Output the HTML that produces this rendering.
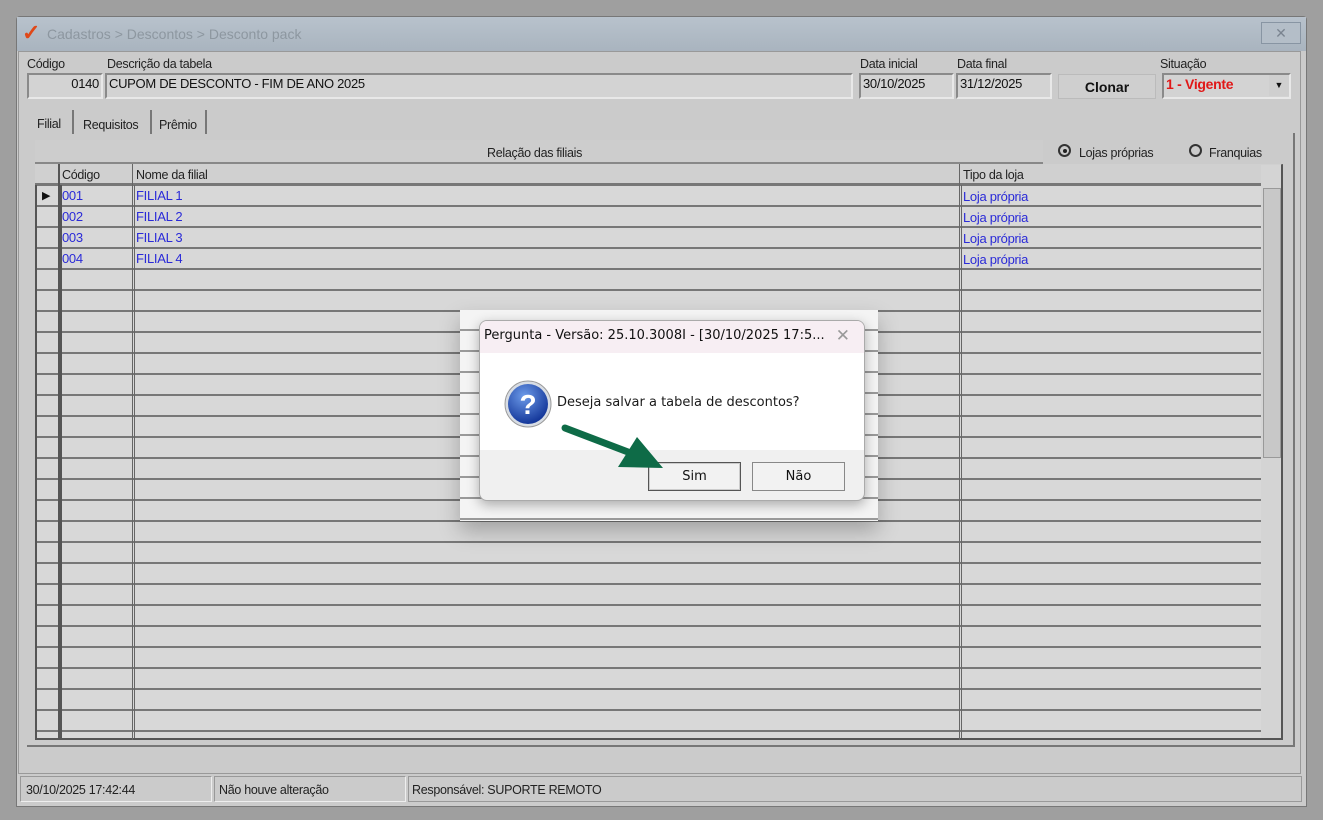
<!DOCTYPE html>
<html><head><meta charset="utf-8"><style>
*{margin:0;padding:0;box-sizing:border-box}
body{width:1323px;height:820px;background:#9f9f9f;position:relative;overflow:hidden;font-family:"Liberation Sans",Arial,sans-serif;font-size:12px;color:#111}
.a{position:absolute}
.win{left:16px;top:16px;width:1291px;height:791px;background:#cbcbcb;border:1px solid #777;border-radius:4px 4px 0 0}
.title{left:17px;top:17px;width:1289px;height:34px;background:linear-gradient(#b8c2cc,#a9b4bf);}
.lbl{font-size:12.5px;color:#222;letter-spacing:-0.3px}
.inp{background:#d3d3d3;border:2px solid #8a8a8a;border-right-color:#e8e8e8;border-bottom-color:#e8e8e8;font-size:13px;padding:1px 2px;letter-spacing:-0.3px}
.grid{left:35px;top:164px;width:1248px;height:576px;border:2px solid #555;border-top:1px solid #888;
background:
linear-gradient(90deg,transparent 23px,#555 23px,#555 25px,transparent 25px,transparent 97px,#666 97px,#666 98px,transparent 98px,transparent 924px,#666 924px,#666 925px,transparent 925px),
repeating-linear-gradient(180deg,transparent 0,transparent 19px,#777 19px,#777 21px);
background-color:#d8d8d8;background-position:0 0,0 0}
.blue{color:#2a2ad8;font-size:13px;letter-spacing:-0.3px}
</style></head><body>
<div class="a win"></div>
<div class="a title"></div>
<div class="a" style="left:22px;top:22px;font-size:22px;color:#e04818;font-weight:bold;line-height:22px">✓</div>
<div class="a" style="left:47px;top:26px;font-size:14px;color:#8d97a0">Cadastros &gt; Descontos &gt; Desconto pack</div>
<div class="a" style="left:1261px;top:22px;width:40px;height:22px;border:1px solid #8895a3;background:#b4bec8;color:#7a8490;text-align:center;font-size:14px;line-height:20px">✕</div>
<div class="a" style="left:18px;top:51px;width:1283px;height:723px;background:#cbcbcb;border:1px solid #999"></div>

<div class="a lbl" style="left:27px;top:57px">Código</div>
<div class="a lbl" style="left:107px;top:57px">Descrição da tabela</div>
<div class="a lbl" style="left:860px;top:57px">Data inicial</div>
<div class="a lbl" style="left:957px;top:57px">Data final</div>
<div class="a lbl" style="left:1160px;top:57px">Situação</div>
<div class="a inp" style="left:27px;top:73px;width:76px;height:26px;text-align:right">0140</div>
<div class="a inp" style="left:105px;top:73px;width:748px;height:26px">CUPOM DE DESCONTO - FIM DE ANO 2025</div>
<div class="a inp" style="left:859px;top:73px;width:95px;height:26px">30/10/2025</div>
<div class="a inp" style="left:956px;top:73px;width:96px;height:26px">31/12/2025</div>
<div class="a" style="left:1058px;top:74px;width:98px;height:25px;background:#cfcfcf;border:1px solid #bbb;font-weight:bold;text-align:center;line-height:24px;font-size:14px">Clonar</div>
<div class="a inp" style="left:1162px;top:73px;width:129px;height:26px;color:#e01818;font-weight:bold;font-size:14px">1 - Vigente</div>
<div class="a" style="left:1269px;top:75px;width:20px;height:21px;background:#cfcfcf;font-size:9px;text-align:center;line-height:21px">▼</div>

<div class="a lbl" style="left:37px;top:117px">Filial</div>
<div class="a" style="left:72px;top:110px;width:2px;height:24px;background:#777"></div>
<div class="a lbl" style="left:83px;top:118px">Requisitos</div>
<div class="a" style="left:150px;top:110px;width:2px;height:24px;background:#777"></div>
<div class="a lbl" style="left:159px;top:118px">Prêmio</div>
<div class="a" style="left:205px;top:110px;width:2px;height:24px;background:#777"></div>
<div class="a" style="left:27px;top:133px;width:1268px;height:614px;border-right:2px solid #777;border-bottom:2px solid #777"></div>

<div class="a" style="left:35px;top:140px;width:1008px;height:24px;background:#cdcdcd;border-bottom:2px solid #888"></div>
<div class="a lbl" style="left:487px;top:146px">Relação das filiais</div>
<div class="a" style="left:1058px;top:144px;width:13px;height:13px;border:2px solid #333;border-radius:50%"><div style="position:absolute;left:2.5px;top:2.5px;width:4px;height:4px;background:#222;border-radius:50%"></div></div>
<div class="a lbl" style="left:1079px;top:146px">Lojas próprias</div>
<div class="a" style="left:1189px;top:144px;width:13px;height:13px;border:2px solid #333;border-radius:50%"></div>
<div class="a lbl" style="left:1209px;top:146px">Franquias</div>

<div class="a grid"></div>
<div class="a" style="left:35px;top:164px;width:1246px;height:21px;background:#d0d0d0;border-bottom:2px solid #777"></div>
<div class="a" style="left:58px;top:164px;width:2px;height:576px;background:#555"></div>
<div class="a" style="left:132px;top:164px;width:1px;height:576px;background:#666"></div>
<div class="a" style="left:959px;top:164px;width:1px;height:576px;background:#666"></div>
<div class="a" style="left:1261px;top:165px;width:20px;height:573px;background:#d4d4d4"></div>
<div class="a" style="left:1263px;top:188px;width:18px;height:270px;background:#c8c8c8;border:1px solid #999"></div>
<div class="a lbl" style="left:62px;top:168px">Código</div>
<div class="a lbl" style="left:136px;top:168px">Nome da filial</div>
<div class="a lbl" style="left:963px;top:168px">Tipo da loja</div>
<div class="a" style="left:42px;top:189px;font-size:11px">▶</div>
<div class="a blue" style="left:62px;top:188px">001</div><div class="a blue" style="left:136px;top:188px">FILIAL 1</div><div class="a blue" style="left:963px;top:189px">Loja própria</div>
<div class="a blue" style="left:62px;top:209px">002</div><div class="a blue" style="left:136px;top:209px">FILIAL 2</div><div class="a blue" style="left:963px;top:210px">Loja própria</div>
<div class="a blue" style="left:62px;top:230px">003</div><div class="a blue" style="left:136px;top:230px">FILIAL 3</div><div class="a blue" style="left:963px;top:231px">Loja própria</div>
<div class="a blue" style="left:62px;top:251px">004</div><div class="a blue" style="left:136px;top:251px">FILIAL 4</div><div class="a blue" style="left:963px;top:252px">Loja própria</div>

<div class="a" style="left:20px;top:776px;width:192px;height:26px;border:1px solid #999;border-right-color:#eee;border-bottom-color:#eee"></div>
<div class="a" style="left:214px;top:776px;width:192px;height:26px;border:1px solid #999;border-right-color:#eee;border-bottom-color:#eee"></div>
<div class="a" style="left:408px;top:776px;width:894px;height:26px;border:1px solid #999"></div>
<div class="a lbl" style="left:26px;top:783px">30/10/2025 17:42:44</div>
<div class="a lbl" style="left:219px;top:783px">Não houve alteração</div>
<div class="a lbl" style="left:412px;top:783px">Responsável: SUPORTE REMOTO</div>

<!-- bright area behind dialog -->
<div class="a" style="left:460px;top:310px;width:418px;height:211px;background:repeating-linear-gradient(180deg,#f4f4f4 0,#f4f4f4 19px,#999 19px,#999 21px);box-shadow:0 10px 20px rgba(0,0,0,.25)"></div>
<div class="a" style="left:479px;top:320px;width:386px;height:181px;background:#f0f0f0;border:1px solid #aaa;border-radius:8px;overflow:hidden;box-shadow:0 4px 12px rgba(0,0,0,.3)">
  <div style="height:32px;background:#f7eef3;font-family:'DejaVu Sans',sans-serif;font-size:13px;padding:7px 0 0 4px;color:#111">Pergunta - Versão: 25.10.3008I - [30/10/2025 17:5...</div>
  <div class="a" style="right:14px;top:5px;color:#999;font-size:17px">✕</div>
  <div style="height:97px;background:#fff"></div>
</div>
<svg class="a" style="left:503px;top:379px" width="52" height="52" viewBox="0 0 52 52">
<defs><radialGradient id="g" cx="40%" cy="30%" r="70%"><stop offset="0" stop-color="#6c9ae8"/><stop offset="1" stop-color="#14379a"/></radialGradient></defs>
<circle cx="25" cy="25" r="23" fill="#d8dde4" stroke="#999"/>
<circle cx="25" cy="25" r="20" fill="url(#g)"/>
<text x="25" y="35" text-anchor="middle" font-family="Liberation Sans" font-weight="bold" font-size="28" fill="#fff">?</text>
</svg>
<div class="a" style="left:557px;top:395px;font-family:'DejaVu Sans',sans-serif;font-size:13px;color:#1a1a1a">Deseja salvar a tabela de descontos?</div>
<div class="a" style="left:648px;top:462px;width:93px;height:29px;border:1px solid #555;background:#f2f2f2;box-shadow:inset 0 0 0 1px #ccc;font-family:'DejaVu Sans',sans-serif;font-size:13px;text-align:center;line-height:27px">Sim</div>
<div class="a" style="left:752px;top:462px;width:93px;height:29px;border:1px solid #888;background:#f2f2f2;font-family:'DejaVu Sans',sans-serif;font-size:13px;text-align:center;line-height:27px">Não</div>
<svg class="a" style="left:0;top:0" width="1323" height="820">
<line x1="565" y1="428" x2="628" y2="452" stroke="#0e6b47" stroke-width="7" stroke-linecap="round"/>
<polygon points="663,468 618,467 637,437" fill="#0e6b47"/>
</svg>
</body></html>
